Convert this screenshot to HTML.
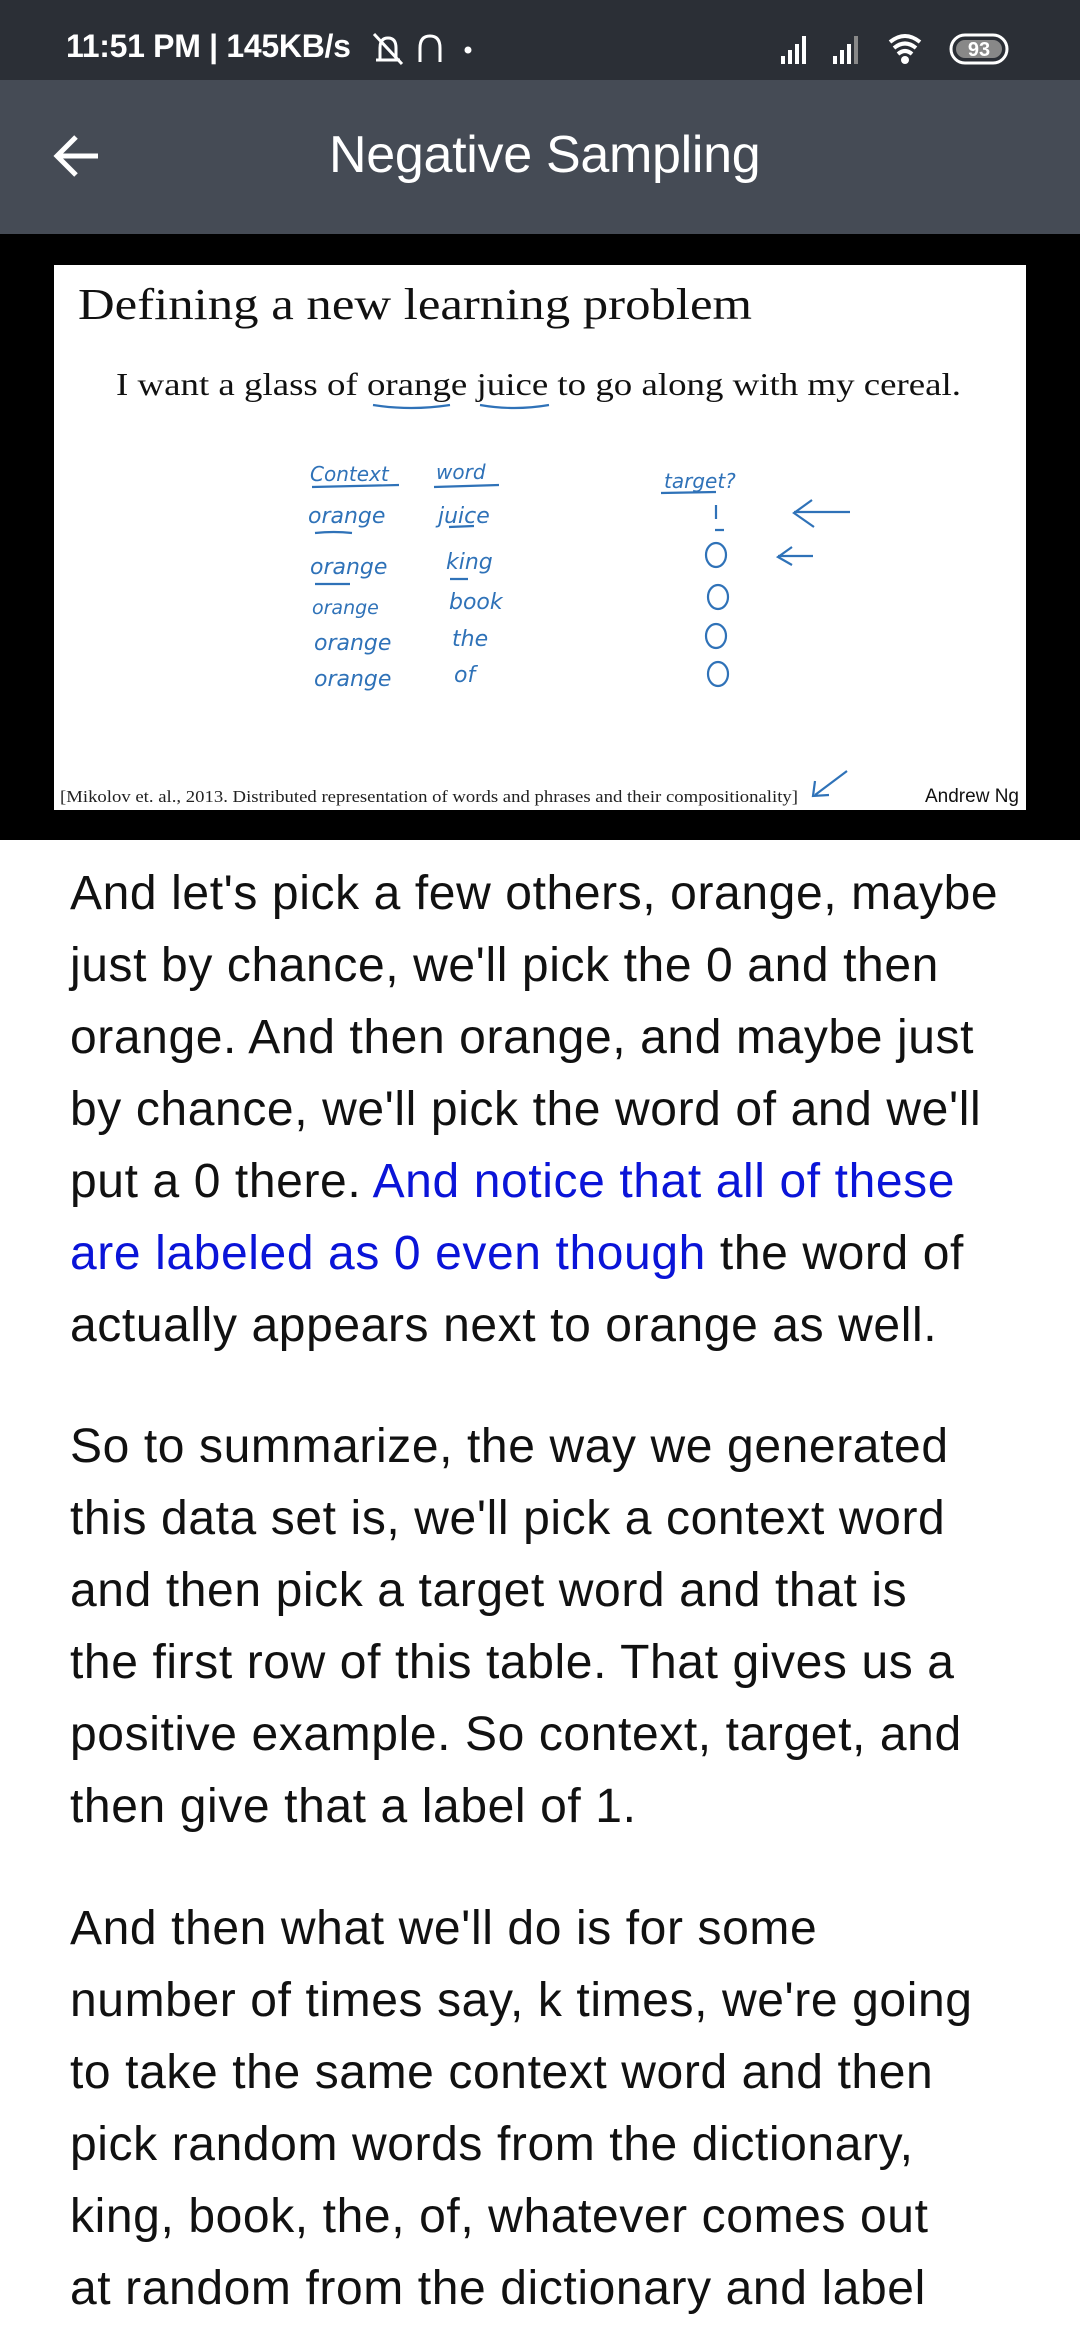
<!DOCTYPE html>
<html><head><meta charset="utf-8"><style>
*{margin:0;padding:0;box-sizing:border-box}
body{width:1080px;height:2340px;background:#fff;position:relative;overflow:hidden;font-family:"Liberation Sans",Arial,sans-serif}
.sb{position:absolute;left:0;top:0;width:1080px;height:80px;background:#2b2f36;color:#fff}
.ab{position:absolute;left:0;top:80px;width:1080px;height:154px;background:#454b55;color:#fff}
.vid{position:absolute;left:0;top:234px;width:1080px;height:606px;background:#000}
.slide{position:absolute;left:54px;top:265px;width:972px;height:545px;background:#fff}
.l{position:absolute;left:70px;white-space:nowrap;font-size:48px;line-height:72px;height:72px;color:#111;letter-spacing:0.6px}
.b{color:#0a14d8}
</style></head><body>
<div class="sb">
<div style="position:absolute;left:66px;top:28px;font-size:32px;font-weight:bold;letter-spacing:-0.3px">11:51 PM | 145KB/s</div>
<svg style="position:absolute;left:370px;top:30px" width="110" height="40" viewBox="0 0 110 40" fill="none" stroke="#fff" stroke-width="3">
<path d="M10 30 L10 18 Q10 8 18 8 Q26 8 26 18 L26 30 M6 30 L30 30 M4 4 L32 34"/>
<path d="M50 32 L50 18 Q50 6 60 6 Q70 6 70 18 L70 32"/><circle cx="98" cy="20" r="2" fill="#fff"/>
</svg>
<svg style="position:absolute;left:775px;top:30px" width="240" height="38" viewBox="0 0 240 38" fill="#fff">
<rect x="6" y="26" width="4" height="8"/><rect x="13" y="20" width="4" height="14"/><rect x="20" y="14" width="4" height="20"/><rect x="27" y="6" width="4" height="28"/>
<rect x="58" y="26" width="4" height="8"/><rect x="65" y="20" width="4" height="14"/><rect x="72" y="14" width="4" height="20"/><rect x="79" y="6" width="4" height="28" fill="#888"/>
<path d="M115 12 Q130 0 145 12 M119 18 Q130 9 141 18 M123 24 Q130 18 137 24" stroke="#fff" stroke-width="4" fill="none"/><circle cx="130" cy="30" r="4"/>
<rect x="176" y="5" width="56" height="28" rx="14" fill="none" stroke="#fff" stroke-width="3"/><rect x="181" y="10" width="46" height="18" rx="9" fill="#888"/>
<text x="204" y="26" font-size="20" font-weight="bold" text-anchor="middle" fill="#fff" font-family="Liberation Sans">93</text>
</svg>
</div>
<div class="ab">
<svg style="position:absolute;left:52px;top:53px" width="50" height="46" viewBox="0 0 50 46" fill="none" stroke="#fff" stroke-width="5"><path d="M46 23 L6 23 M24 4 L5 23 L24 42"/></svg>
<div style="position:absolute;left:329px;top:42px;font-size:52px;line-height:66px;letter-spacing:-0.3px">Negative Sampling</div>
</div>
<div class="vid"></div>
<div class="slide">
<svg width="972" height="545" viewBox="0 0 972 545">
<text x="24" y="54" font-family="Liberation Serif,serif" font-size="44" textLength="674" lengthAdjust="spacingAndGlyphs" fill="#111">Defining a new learning problem</text>
<text x="62" y="130" font-family="Liberation Serif,serif" font-size="32" textLength="845" lengthAdjust="spacingAndGlyphs" fill="#111">I want a glass of orange juice to go along with my cereal.</text>
<g fill="none" stroke="#2f72b8" stroke-width="2.2">
<path d="M319 140 Q357 146 396 140 M426 140 Q460 146 495 140"/>
<path d="M258 222 L345 220 M380 222 L445 220 M607 228 L662 227"/>
<path d="M261 268 Q280 266 298 268 M395 262 L420 261 M662 240 L662 254 M661 265 L670 265 M261 319 L296 319 M396 314 L414 314"/>
<ellipse cx="662" cy="290" rx="10" ry="12"/><ellipse cx="664" cy="332" rx="10" ry="12"/><ellipse cx="662" cy="371" rx="10" ry="12"/><ellipse cx="664" cy="409" rx="10" ry="12"/>
<path d="M796 247 L740 247 M758 235 L740 248 L760 262 M759 291 L724 291 M738 282 L724 292 L738 300 M793 506 L761 530 M761 516 L759 531 L775 530"/>
</g>
<g font-family="DejaVu Sans,sans-serif" font-style="italic" font-size="22" fill="#2f72b8">
<text x="256" y="216" font-size="20">Context</text><text x="382" y="214" font-size="20">word</text><text x="610" y="223" font-size="20">target?</text>
<text x="254" y="258">orange</text><text x="384" y="258">juice</text>
<text x="256" y="309">orange</text><text x="392" y="304">king</text>
<text x="258" y="349" font-size="19">orange</text><text x="395" y="344">book</text>
<text x="260" y="385">orange</text><text x="398" y="381">the</text>
<text x="260" y="421">orange</text><text x="400" y="417">of</text>
</g>
<text x="6" y="537" font-family="Liberation Serif,serif" font-size="17" textLength="738" lengthAdjust="spacingAndGlyphs" fill="#222">[Mikolov et. al., 2013. Distributed representation of words and phrases and their compositionality]</text>
<text x="871" y="537" font-family="Liberation Sans,sans-serif" font-size="19" fill="#111">Andrew Ng</text>
</svg>
</div>

<div class="l" style="top:858px">And let's pick a few others, orange, maybe</div>
<div class="l" style="top:930px">just by chance, we'll pick the 0 and then</div>
<div class="l" style="top:1002px">orange. And then orange, and maybe just</div>
<div class="l" style="top:1074px">by chance, we'll pick the word of and we'll</div>
<div class="l" style="top:1146px">put a 0 there. <span class="b">And notice that all of these</span></div>
<div class="l" style="top:1218px"><span class="b">are labeled as 0 even though</span> the word of</div>
<div class="l" style="top:1290px">actually appears next to orange as well.</div>

<div class="l" style="top:1411px">So to summarize, the way we generated</div>
<div class="l" style="top:1483px">this data set is, we'll pick a context word</div>
<div class="l" style="top:1555px">and then pick a target word and that is</div>
<div class="l" style="top:1627px">the first row of this table. That gives us a</div>
<div class="l" style="top:1699px">positive example. So context, target, and</div>
<div class="l" style="top:1771px">then give that a label of 1.</div>

<div class="l" style="top:1893px">And then what we'll do is for some</div>
<div class="l" style="top:1965px">number of times say, k times, we're going</div>
<div class="l" style="top:2037px">to take the same context word and then</div>
<div class="l" style="top:2109px">pick random words from the dictionary,</div>
<div class="l" style="top:2181px">king, book, the, of, whatever comes out</div>
<div class="l" style="top:2253px">at random from the dictionary and label</div>
</body></html>
